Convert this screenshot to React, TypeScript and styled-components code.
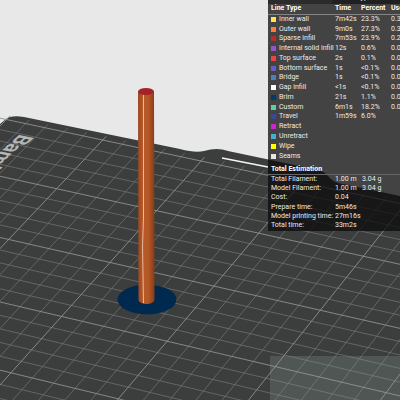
import React from 'react';
import styled, { createGlobalStyle } from 'styled-components';

const GlobalStyle = createGlobalStyle`
  body { margin: 0; background: #e8e8e8; }
`;

const Viewport = styled.main`
  position: relative;
  display: flex;
  flex-direction: column;
  justify-content: space-between;
  align-items: flex-end;
  min-height: 100vh;
  overflow: hidden;
  font: 7px/9px Roboto, sans-serif;
  color: #ececec;
`;

const Scene = styled.svg`
  position: absolute;
  inset: 0;
  width: 100%;
  height: 100%;
`;

const StatsPanel = styled.section`
  position: relative;
  width: 33%;
  padding-bottom: 1px;
  overflow: hidden;
  background: rgba(10, 10, 10, 0.74);
`;

const SchemeBar = styled.div`
  display: flex;
  align-items: flex-end;
  justify-content: flex-end;
  height: 4px;
  overflow: hidden;
  background: #2b2b2b;
`;

const SchemeValue = styled.span`
  width: 68px;
  padding: 0 0 2px 10px;
  box-sizing: border-box;
  background: #202020;
`;

const StatsTable = styled.table<{ $height: number }>`
  table-layout: fixed;
  width: 148px;
  height: ${(p) => p.$height}px;
  border-collapse: collapse;
  white-space: nowrap;
  text-align: left;

  th, td { padding: 0; vertical-align: middle; font-weight: 400; }
  th:first-child, td:first-child { padding-left: 3px; }
`;

const Col = styled.col<{ $width: number }>`
  width: ${(p) => p.$width}px;
`;

const TableHead = styled.thead`
  tr { height: 10px; border-bottom: 1px solid #858585; }
  tr > th { font-weight: 700; color: #fff; }
`;

const LineName = styled.span`
  display: flex;
  align-items: center;
  gap: 3px;
`;

const Swatch = styled.i<{ $color: string }>`
  flex: none;
  width: 5px;
  height: 5px;
  background: ${(p) => p.$color};
`;

const Heading = styled.h2`
  margin: 4px 0 0;
  padding: 0 3px;
  border-bottom: 1px solid #666;
  font-size: 7px;
  line-height: 9px;
  color: #fff;
`;

const SliderTray = styled.aside`
  position: relative;
  width: 130px;
  height: 44px;
  background: rgba(140, 160, 155, 0.25);
`;

const lineTypes: [string, string, string?, string?, string?][] = [
  ['Inner wall', '#ffe64d', '7m42s', '23.3%', '0.3'],
  ['Outer wall', '#ff7d38', '9m0s', '27.3%', '0.3'],
  ['Sparse infill', '#b03029', '7m53s', '23.9%', '0.2'],
  ['Internal solid infill', '#9654cc', '12s', '0.6%', '0.0'],
  ['Top surface', '#f04040', '2s', '0.1%', '0.0'],
  ['Bottom surface', '#665cc7', '1s', '<0.1%', '0.0'],
  ['Bridge', '#4d80ba', '1s', '<0.1%', '0.0'],
  ['Gap infill', '#ffffff', '<1s', '<0.1%', '0.0'],
  ['Brim', '#003b6e', '21s', '1.1%', '0.0'],
  ['Custom', '#5ed194', '6m1s', '18.2%', '0.0'],
  ['Travel', '#38489b', '1m59s', '6.0%'],
  ['Retract', '#cd22d6'],
  ['Unretract', '#49adcf'],
  ['Wipe', '#ffff00'],
  ['Seams', '#e6e6e6'],
];

const totals: [string, string, string?][] = [
  ['Total Filament:', '1.00 m', '3.04 g'],
  ['Model Filament:', '1.00 m', '3.04 g'],
  ['Cost:', '0.04'],
  ['Prepare time:', '5m46s'],
  ['Model printing time:', '27m16s'],
  ['Total time:', '33m2s'],
];

// Projects a bed coordinate (in units of five grid cells) on to the view.
function project(u: number, v: number) {
  const w = 1 - 0.0112 * u - 0.0201 * v;
  const x = (96.12 * u - 47.21 * v + 102.69) / w;
  const y = (19.18 * u + 44.86 * v + 140.07) / w;
  return `${x.toFixed(1)} ${y.toFixed(1)}`;
}

function gridPath(major: boolean) {
  let d = '';
  for (let i = -5; i <= 40; i++) {
    if ((i % 5 === 0) !== major) continue;
    const t = i / 5;
    d += `M${project(t, -0.08)}L${project(t, 6)}`;
    if (i >= 0) d += `M${project(-1.1, t)}L${project(8, t)}`;
  }
  return d;
}

function PrintBed() {
  return (
    <Scene viewBox="0 0 400 400" preserveAspectRatio="xMinYMin slice" aria-label="Sliced model on the build plate">
      <defs>
        <linearGradient id="rod">
          <stop offset="0" stopColor="#99471f" />
          <stop offset=".3" stopColor="#b95a29" />
          <stop offset=".65" stopColor="#b35525" />
          <stop offset="1" stopColor="#843d18" />
        </linearGradient>
      </defs>
      <path d="M0 124L6 119Q11 115 24 117L180 149Q195 153 204 151Q217 147 228 151L318 170Q324 171 328 176Q332 181 338 183L400 196V400H0Z" fill="#3c3e3d" />
      <path d={gridPath(false)} fill="none" stroke="#747775" strokeWidth=".7" />
      <path d={gridPath(true)} fill="none" stroke="#8e918f" strokeWidth=".9" />
      <path d="M222 158L268 167" stroke="#f4f4f4" strokeWidth="1.6" />
      <text transform="matrix(-.72 .65 -.95 -.2 20 134)" fontFamily="Roboto" fontWeight="700" fontSize="22" fill="#b4b6b5">Bambu</text>
      <ellipse cx="147" cy="299.5" rx="29.5" ry="15" fill="#00294f" />
      <path d="M138 92L138.5 300A8 4 0 0 0 154.5 300L154 92Z" fill="url(#rod)" />
      <ellipse cx="146" cy="91.5" rx="8" ry="3.6" fill="#a32428" />
      <path d="M143.5 95V218L142.5 246L143.5 303" fill="none" stroke="#e8b99c" strokeWidth="1" />
    </Scene>
  );
}

export default function App() {
  return (
    <Viewport>
      <GlobalStyle />
      <PrintBed />
      <StatsPanel>
        <SchemeBar><SchemeValue>Line Type</SchemeValue></SchemeBar>
        <StatsTable $height={157}>
          <colgroup><Col $width={67} /><Col $width={26} /><Col $width={30} /><Col $width={25} /></colgroup>
          <TableHead>
            <tr><th>Line Type</th><th>Time</th><th>Percent</th><th>Used</th></tr>
          </TableHead>
          <tbody>
            {lineTypes.map(([name, color, ...cells]) => (
              <tr key={name}>
                <th scope="row"><LineName><Swatch $color={color} />{name}</LineName></th>
                {cells.map((cell, i) => <td key={i}>{cell}</td>)}
              </tr>
            ))}
          </tbody>
        </StatsTable>
        <Heading>Total Estimation</Heading>
        <StatsTable $height={55}>
          <colgroup><Col $width={67} /><Col $width={27} /><Col $width={54} /></colgroup>
          <tbody>
            {totals.map(([label, value, weight]) => (
              <tr key={label}><th scope="row">{label}</th><td>{value}</td><td>{weight}</td></tr>
            ))}
          </tbody>
        </StatsTable>
      </StatsPanel>
      <SliderTray />
    </Viewport>
  );
}
